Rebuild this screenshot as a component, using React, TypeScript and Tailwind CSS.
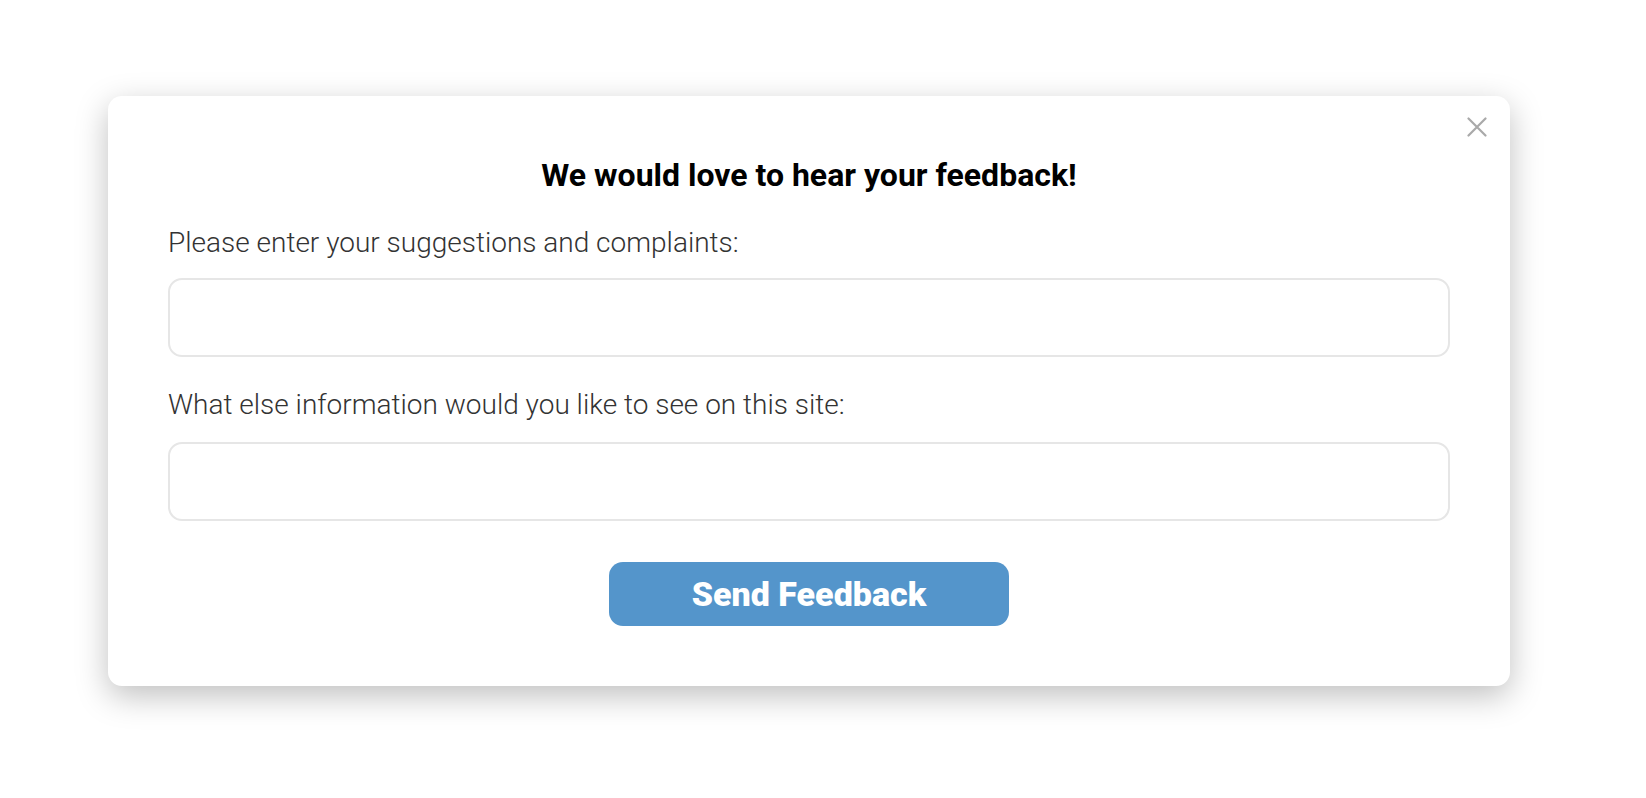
import { FC } from 'react';

const CloseIcon: FC = () => (
  <svg width="20" height="20" viewBox="0 0 20 20" fill="none" stroke="#a9a9a9" strokeWidth="2.2" strokeLinecap="round">
    <path d="M1.5 1.5L18.5 18.5M18.5 1.5L1.5 18.5" />
  </svg>
);

const App: FC = () => {
  return (
    <div className="min-h-screen bg-white font-['Roboto',sans-serif] pt-[96px] pl-[108px]">
      <div className="relative w-[1402px] rounded-[14px] bg-white px-[60px] pt-[61px] pb-[60px] shadow-[0_10px_32px_rgba(0,0,0,0.25)]">
        <button className="absolute top-[21px] right-[23px]">
          <CloseIcon />
        </button>
        <h2 className="text-center text-[32px] leading-[36px] font-bold text-black">
          We would love to hear your feedback!
        </h2>
        <label className="mt-[32px] block text-[28px] leading-[36px] font-light text-[#333]">
          Please enter your suggestions and complaints:
        </label>
        <input
          type="text"
          className="mt-[17px] block h-[79px] w-full rounded-[14px] border-2 border-[#e6e6e6] outline-none"
        />
        <label className="mt-[30px] block text-[28px] leading-[36px] font-light text-[#333]">
          What else information would you like to see on this site:
        </label>
        <input
          type="text"
          className="mt-[19px] block h-[79px] w-full rounded-[14px] border-2 border-[#e6e6e6] outline-none"
        />
        <div className="mt-[41px] flex justify-center">
          <button className="h-[64px] w-[400px] rounded-[14px] bg-[#5495cb] text-[34px] font-black text-white">
            Send Feedback
          </button>
        </div>
      </div>
    </div>
  );
};

export default App;
